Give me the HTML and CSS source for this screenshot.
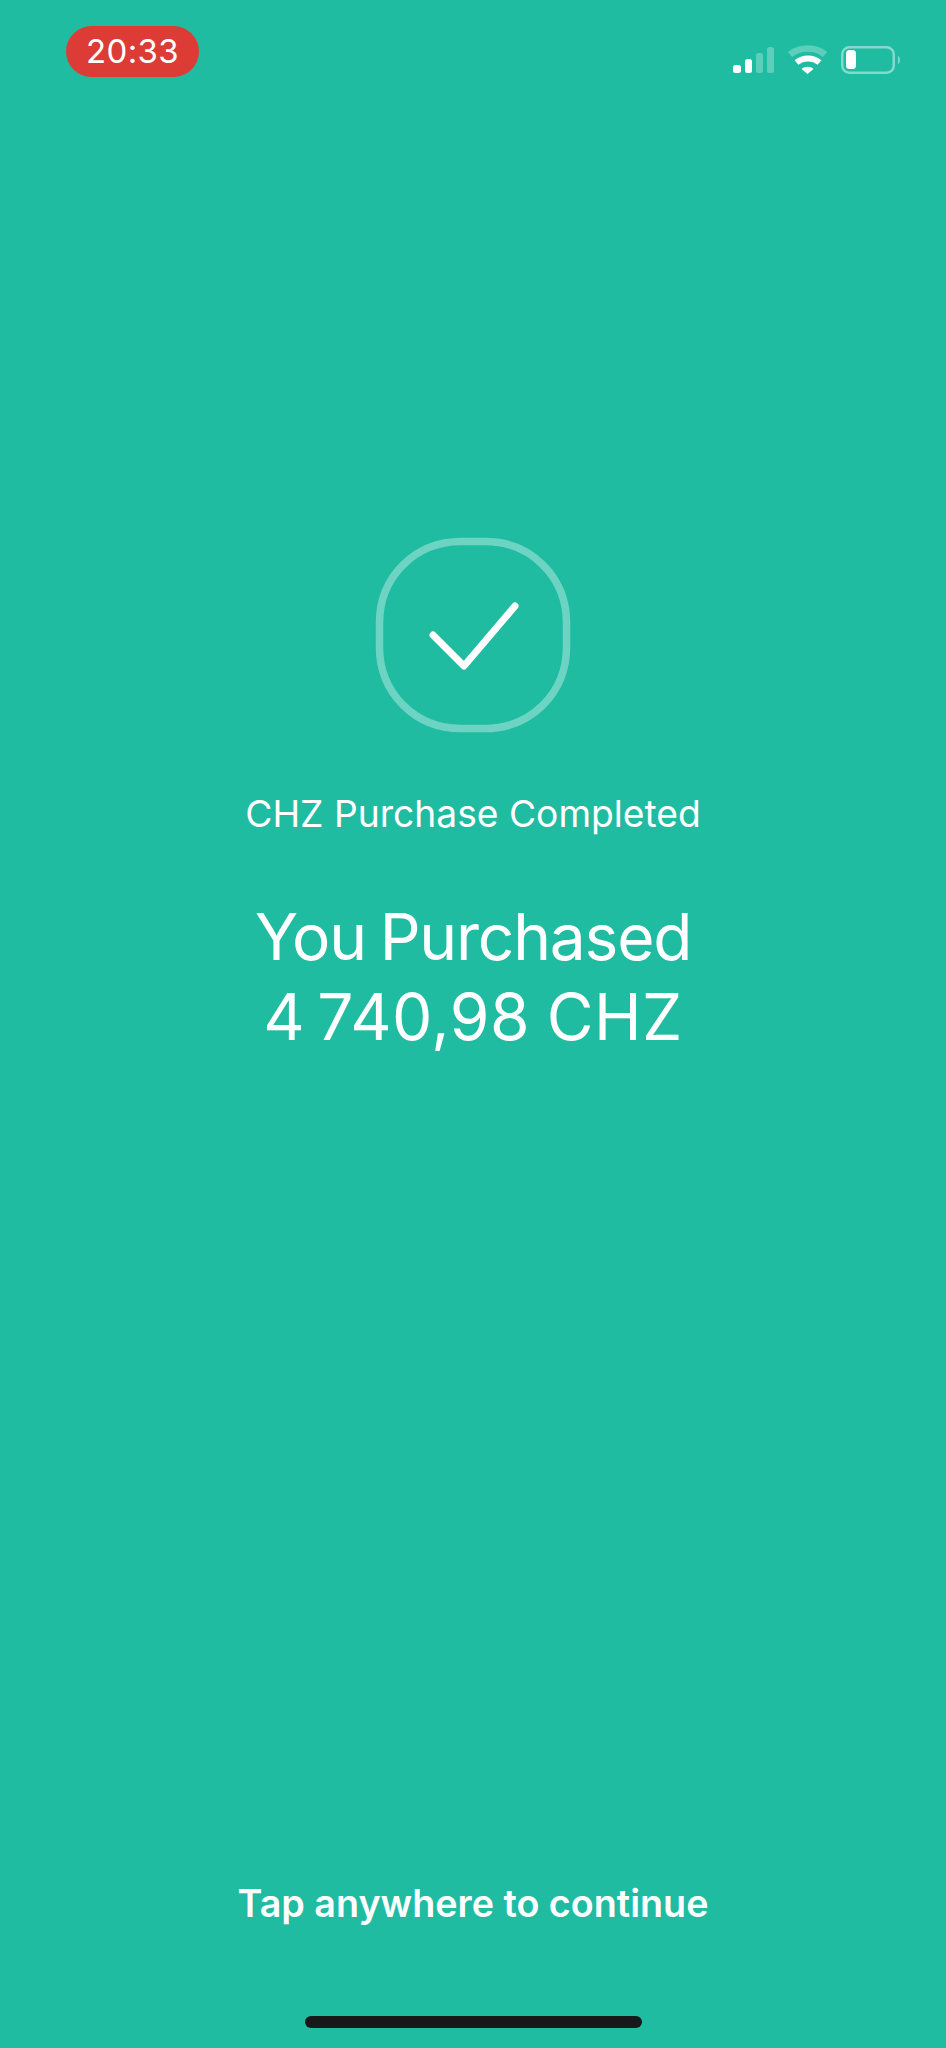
FILE: index.html
```html
<!DOCTYPE html>
<html lang="en">
<head>
<meta charset="utf-8">
<title>CHZ Purchase Completed</title>
<link rel="stylesheet" href="styles.css">
</head>
<body>
<main class="screen">
  <header class="status">
    <div class="time">20:33</div>
    <div class="indicators">
      <svg class="signal" width="42" height="30" viewBox="0 0 42 30">
        <rect x="1" y="20" width="8" height="8" rx="2.5" fill="#fff"/>
        <rect x="13" y="14" width="7" height="14" rx="2.5" fill="#fff"/>
        <rect x="24" y="8" width="7" height="20" rx="2.5" fill="#fff" opacity=".28"/>
        <rect x="35" y="2" width="7" height="26" rx="2.5" fill="#fff" opacity=".28"/>
      </svg>
      <svg class="wifi" width="42" height="30" viewBox="0 0 42 30">
        <path d="M4 9.500C13.500 1.500 30 1.500 39 9.500" fill="none" stroke="#fff" stroke-opacity=".28" stroke-width="6.500"/>
        <path d="M10.500 17.500C17 12 27 12 33.500 17.500" fill="none" stroke="#fff" stroke-width="6"/>
        <path d="M15.500 24C19 21 24.500 21 27.500 24L21.500 29Z" fill="#fff"/>
      </svg>
      <svg class="battery" width="62" height="30" viewBox="0 0 62 30">
        <rect x="2.250" y="2.250" width="51.500" height="25.500" rx="7" fill="none" stroke="#fff" stroke-opacity=".45" stroke-width="2.500"/>
        <rect x="6" y="5" width="10" height="19" rx="3.500" fill="#fff"/>
        <path d="M58 11C60.500 12 60.500 18 58 19Z" fill="#fff" fill-opacity=".45"/>
      </svg>
    </div>
  </header>

  <section class="result">
    <svg class="badge" width="196" height="196" viewBox="0 0 196 196">
      <path d="M86 4.500H110C156 4.500 191.500 40 191.500 86V110C191.500 156 156 191.500 110 191.500H86C40 191.500 4.500 156 4.500 110V86C4.500 40 40 4.500 86 4.500Z" fill="none" stroke="#fff" stroke-opacity=".35" stroke-width="7.500"/>
      <path d="M58 98L89 129L140 69" fill="none" stroke="#fff" stroke-width="7" stroke-linecap="round" stroke-linejoin="round"/>
    </svg>
    <p class="caption">CHZ Purchase Completed</p>
    <h1 class="amount"><span class="amount-label">You Purchased</span><span class="amount-value">4&thinsp;740,98 CHZ</span></h1>
  </section>

  <footer class="footer">
    <p class="hint">Tap anywhere to continue</p>
    <div class="home"></div>
  </footer>
</main>
</body>
</html>
```
FILE: styles.css
```css
* { box-sizing: border-box; }
html, body { margin: 0; padding: 0; }
body { background: #20bca2; font-family: Inter, "Liberation Sans", sans-serif; color: #fff; }
.screen { width: 946px; height: 2048px; display: flex; flex-direction: column; overflow: hidden; }
.status { display: flex; justify-content: space-between; align-items: flex-start; padding: 26px 44px 0 66px; height: 537px; }
.time { width: 133px; height: 51px; border-radius: 26px; background: #dc3c35; font-size: 33px; line-height: 51px; text-align: center; letter-spacing: .4px; }
.indicators { display: flex; align-items: center; gap: 12px; padding-top: 19px; }
.signal, .wifi, .battery { display: block; }
.result { display: flex; flex-direction: column; align-items: center; }
.badge { display: block; }
.caption { margin: 57px 0 0; font-size: 37.2px; line-height: 48px; font-weight: 400; }
.amount { margin: 59px 0 0; font-size: 64px; line-height: 80px; font-weight: 400; text-align: center; }
.amount-label { display: block; letter-spacing: -1.2px; word-spacing: -3px; }
.amount-value { display: block; letter-spacing: .5px; word-spacing: -2px; }
.footer { margin-top: auto; display: flex; flex-direction: column; align-items: center; padding-bottom: 20px; }
.hint { margin: 0; font-size: 37.7px; line-height: 50px; font-weight: 600; }
.home { width: 337px; height: 12px; border-radius: 6px; background: #17181a; margin-top: 88px; }
```
